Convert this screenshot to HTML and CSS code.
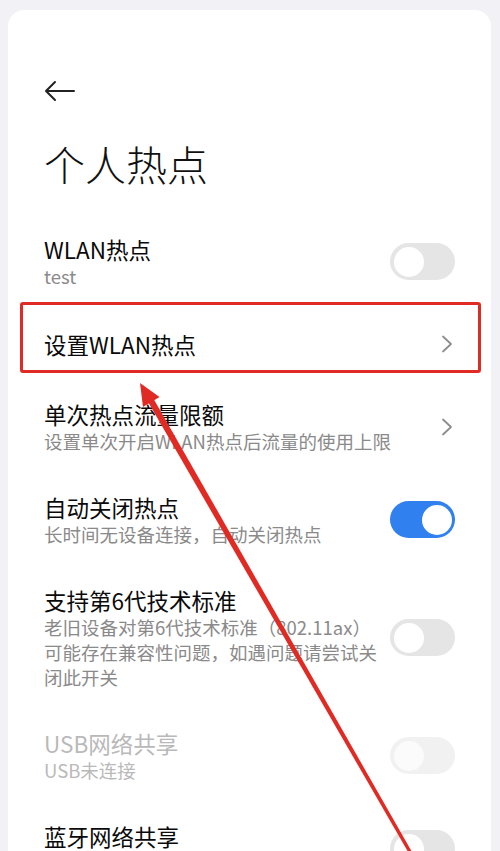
FILE: index.html
```html
<!DOCTYPE html>
<html lang="zh-CN">
<head>
<meta charset="utf-8">
<title>个人热点</title>
<link rel="stylesheet" href="styles.css">
</head>
<body>
<div class="card">
  <div class="back">
    <svg width="32" height="22" viewBox="0 0 32 22"><path d="M2 11 H30 M11 2 L2 11 L11 20" fill="none" stroke="#222" stroke-width="2" stroke-linecap="round" stroke-linejoin="round"/></svg>
  </div>
  <h1 class="page-title">个人热点</h1>
  <div class="list">
    <div class="row">
      <div class="texts">
        <div class="title">WLAN热点</div>
        <div class="sub">test</div>
      </div>
      <div class="toggle"><span class="knob"></span></div>
    </div>
    <div class="row single">
      <div class="texts"><div class="title">设置WLAN热点</div></div>
      <svg class="chev" width="12" height="18" viewBox="0 0 12 18"><path d="M2 1.5 L10 9 L2 16.5" fill="none" stroke="#8c8c8c" stroke-width="1.8" stroke-linecap="round" stroke-linejoin="round"/></svg>
    </div>
    <div class="row">
      <div class="texts">
        <div class="title">单次热点流量限额</div>
        <div class="sub">设置单次开启WLAN热点后流量的使用上限</div>
      </div>
      <svg class="chev" width="12" height="18" viewBox="0 0 12 18"><path d="M2 1.5 L10 9 L2 16.5" fill="none" stroke="#8c8c8c" stroke-width="1.8" stroke-linecap="round" stroke-linejoin="round"/></svg>
    </div>
    <div class="row">
      <div class="texts">
        <div class="title">自动关闭热点</div>
        <div class="sub">长时间无设备连接，自动关闭热点</div>
      </div>
      <div class="toggle on"><span class="knob"></span></div>
    </div>
    <div class="row">
      <div class="texts">
        <div class="title">支持第6代技术标准</div>
        <div class="sub nowrap">老旧设备对第6代技术标准（802.11ax）<br>可能存在兼容性问题，如遇问题请尝试关<br>闭此开关</div>
      </div>
      <div class="toggle"><span class="knob"></span></div>
    </div>
    <div class="row disabled">
      <div class="texts">
        <div class="title">USB网络共享</div>
        <div class="sub">USB未连接</div>
      </div>
      <div class="toggle off-dis"><span class="knob"></span></div>
    </div>
    <div class="row">
      <div class="texts">
        <div class="title">蓝牙网络共享</div>
        <div class="sub">&nbsp;</div>
      </div>
      <div class="toggle"><span class="knob"></span></div>
    </div>
  </div>
</div>
<div class="highlight"></div>
<svg class="annot" width="500" height="851" viewBox="0 0 500 851">
  <polygon points="148.8,390.4 143.2,393.6 409,853.5 412,852" fill="#e02b25"/>
  <polygon points="140,383 159.5,397 143,407" fill="#e02b25"/>
</svg>
</body>
</html>
```
FILE: styles.css
```css
html, body {
  margin: 0;
  padding: 0;
}
body {
  background: #f1f1f6;
  width: 500px;
  height: 851px;
  overflow: hidden;
  position: relative;
  font-family: "Noto Sans CJK SC", "Noto Sans", sans-serif;
  color: #111;
}
.card {
  margin: 10px 0 0 8px;
  width: 483px;
  min-height: 900px;
  background: #ffffff;
  border-radius: 16px;
  padding: 70px 36px 0 36px;
  box-sizing: border-box;
}
.back {
  height: 22px;
}
.back svg {
  display: block;
}
.page-title {
  margin: 37px 0 0 0;
  font-size: 41px;
  line-height: 48px;
  font-weight: 200;
  color: #111;
  letter-spacing: 0;
}
.list {
  margin-top: 28px;
  display: flex;
  flex-direction: column;
}
.row {
  display: flex;
  align-items: center;
  justify-content: space-between;
  padding: 19px 0;
  gap: 12px;
}
.row.single {
  padding: 0;
  min-height: 72px;
}
.texts {
  flex: 1;
  min-width: 0;
}
.title {
  font-size: 22.5px;
  line-height: 30px;
  font-weight: 400;
  color: #0a0a0a;
}
.sub {
  font-size: 18.5px;
  line-height: 25px;
  color: #8a8a8a;
}
.sub.nowrap {
  white-space: nowrap;
}
.disabled .title,
.disabled .sub {
  color: #b9b9b9;
}
.chev {
  display: block;
  flex: none;
  margin-right: 2px;
}
.toggle {
  flex: none;
  width: 65px;
  height: 37px;
  border-radius: 19px;
  background: #e5e5e5;
  box-sizing: border-box;
  padding: 3.5px;
  display: flex;
  align-items: center;
}
.knob {
  width: 30px;
  height: 30px;
  border-radius: 50%;
  background: #ffffff;
}
.toggle.on {
  background: #3180ef;
  justify-content: flex-end;
}
.toggle.off-dis {
  background: #f1f1f1;
}
.toggle.off-dis .knob {
  background: #fbfbfb;
}
.highlight {
  position: absolute;
  left: 20px;
  top: 302px;
  width: 461px;
  height: 71px;
  border: 3.5px solid #e02b25;
  border-radius: 3px;
  box-sizing: border-box;
}
.annot {
  position: absolute;
  left: 0;
  top: 0;
  pointer-events: none;
}
```
